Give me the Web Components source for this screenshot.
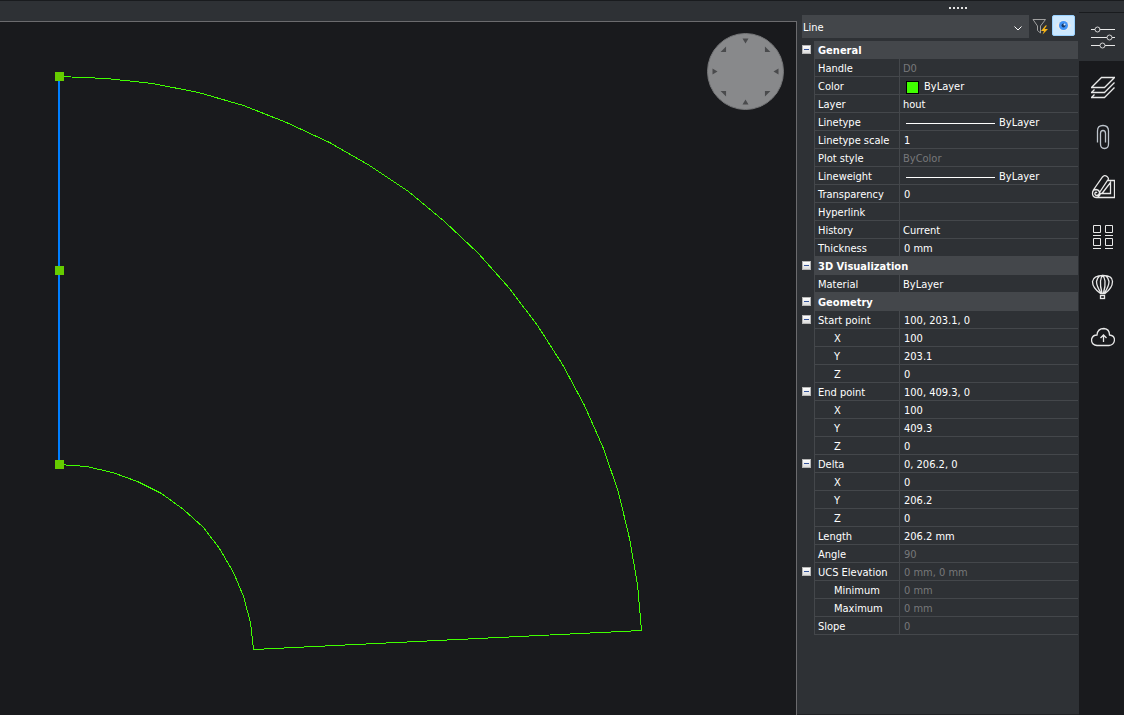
<!DOCTYPE html>
<html lang="en">
<head>
<meta charset="utf-8">
<title>Drawing – Properties</title>
<style>
  html, body { height: 100%; margin: 0; }
  body {
    background: #191a1d;
    color: #fff;
    font: 11px/18px "DejaVu Sans Condensed", Tahoma, "Noto Sans", sans-serif;
    --panel: #2e3135;
    --bar: #44474b;
    --canvas: #191a1d;
    --edge: #6b6b6e;
    --muted: #77787a;
  }
</style>
</head>
<body>
<cad-app>
  <drawing-view slot="drawing"></drawing-view>
  <property-panel slot="panel"></property-panel>
  <side-rail slot="rail"></side-rail>
</cad-app>

<script>
class CadApp extends HTMLElement {
  constructor() {
    super();
    this.attachShadow({ mode: 'open' }).innerHTML = `
      <style>
        :host { display: flex; min-height: 100vh; box-sizing: border-box; border-top: 1px solid #191b1e; background: var(--panel); }
        main { flex: 1; min-width: 0; display: flex; flex-direction: column; padding-top: 20px; }
        ::slotted([slot=drawing]) { flex: 1; }
        aside { flex: 0 0 282px; display: flex; }
        nav { flex: 0 0 45px; display: flex; }
        ::slotted([slot=panel]), ::slotted([slot=rail]) { flex: 1; min-width: 0; }
      </style>
      <main><slot name="drawing"></slot></main>
      <aside><slot name="panel"></slot></aside>
      <nav aria-label="Panels"><slot name="rail"></slot></nav>`;
  }
}

class DrawingView extends HTMLElement {
  constructor() {
    super();
    const cx = 59, cy = 636.7;
    const arc = (r, steps) => Array.from({ length: steps + 1 }, (_, i) => {
      const a = i / steps * 87.2 * Math.PI / 180;
      return Math.round(cx + r * Math.sin(a)) + ',' + Math.round(cy - r * Math.cos(a));
    });
    const outline = arc(583, 19).concat(arc(194.6, 11).reverse()).join(' ');
    const grip = y => `<rect x="55" y="${y - 4}" width="9" height="9" fill="#66cc00"/>`;
    this.attachShadow({ mode: 'open' }).innerHTML = `
      <style>
        :host { display: block; position: relative; overflow: hidden; background: var(--canvas); border: solid var(--edge); border-width: 1px 1px 0 0; }
        .sheet { position: absolute; inset: 0; width: 100%; height: 100%; }
        nav-wheel { position: absolute; top: 11px; right: 12px; }
      </style>
      <svg class="sheet" role="img" aria-label="Drawing" shape-rendering="crispEdges">
        <polyline points="${outline}" transform="translate(.5 .5)" fill="none" stroke="#40ff00"/>
        <rect x="58" y="54" width="2" height="388" fill="#007fff"/>
        ${grip(54)}${grip(248)}${grip(442)}
      </svg>
      <nav-wheel></nav-wheel>`;
  }
}

class NavWheel extends HTMLElement {
  constructor() {
    super();
    const corner = {
      45: 'M-2.500 2.500H3L-2.500 -3Z',
      135: 'M-2.500 -2.500H3L-2.500 3Z',
      225: 'M2.500 -2.500H-3L2.500 3Z',
      315: 'M2.500 2.500H-3L2.500 -3Z'
    };
    const marks = [0, 45, 90, 135, 180, 225, 270, 315].map(a => {
      const t = a * Math.PI / 180;
      const x = 38.5 + 31 * Math.sin(t), y = 38.5 - 31 * Math.cos(t);
      return a in corner
        ? `<path transform="translate(${x} ${y})" d="${corner[a]}"/>`
        : `<path transform="translate(${x} ${y}) rotate(${a})" d="M-3 -2H3L0 3Z"/>`;
    }).join('');
    this.attachShadow({ mode: 'open' }).innerHTML = `
      <style>:host { display: block; } svg { display: block; }</style>
      <svg width="77" height="77" aria-hidden="true">
        <circle cx="38.500" cy="38.500" r="38" fill="#88898b" stroke="#747577"/>
        <g fill="#4a4b4d">${marks}</g>
      </svg>`;
  }
}

/* [name, value, {options}] – a one-item entry is a category heading. */
const ROWS = [
  ['General'],
  ['Handle', 'D0', { off: 1 }],
  ['Color', 'ByLayer', { swatch: 1 }],
  ['Layer', 'hout'],
  ['Linetype', 'ByLayer', { line: 1 }],
  ['Linetype scale', '1'],
  ['Plot style', 'ByColor', { off: 1 }],
  ['Lineweight', 'ByLayer', { line: 1 }],
  ['Transparency', '0'],
  ['Hyperlink', ''],
  ['History', 'Current'],
  ['Thickness', '0 mm'],
  ['3D Visualization'],
  ['Material', 'ByLayer'],
  ['Geometry'],
  ['Start point', '100, 203.1, 0', { open: 1 }],
  ['X', '100', { sub: 1 }],
  ['Y', '203.1', { sub: 1 }],
  ['Z', '0', { sub: 1 }],
  ['End point', '100, 409.3, 0', { open: 1 }],
  ['X', '100', { sub: 1 }],
  ['Y', '409.3', { sub: 1 }],
  ['Z', '0', { sub: 1 }],
  ['Delta', '0, 206.2, 0', { open: 1 }],
  ['X', '0', { sub: 1 }],
  ['Y', '206.2', { sub: 1 }],
  ['Z', '0', { sub: 1 }],
  ['Length', '206.2 mm'],
  ['Angle', '90', { off: 1 }],
  ['UCS Elevation', '0 mm, 0 mm', { off: 1, open: 1 }],
  ['Minimum', '0 mm', { off: 1, sub: 1 }],
  ['Maximum', '0 mm', { off: 1, sub: 1 }],
  ['Slope', '0', { off: 1 }]
];

class PropertyGrid extends HTMLElement {
  constructor() {
    super();
    const toggle = name => `<td class="gutter"><button type="button" aria-expanded="true" aria-label="Collapse ${name}"></button></td>`;
    const rows = ROWS.map(([name, value, o = {}]) => {
      if (value === undefined)
        return `<tr class="group">${toggle(name)}<th colspan="2" scope="colgroup">${name}</th></tr>`;
      const mark = o.swatch ? '<i class="swatch"></i>' : o.line ? '<i class="line"></i>' : '';
      const number = /^\d/.test(value) ? ' number' : '';
      return `<tr class="${o.off ? 'off' : ''}${o.sub ? ' sub' : ''}">${o.open ? toggle(name) : '<td class="gutter"></td>'}` +
        `<th scope="row">${name}</th><td class="value${number}">${mark}${value}</td></tr>`;
    }).join('');
    this.attachShadow({ mode: 'open' }).innerHTML = `
      <style>
        :host { display: block; }
        table { width: 100%; table-layout: fixed; border-collapse: separate; border-spacing: 0; }
        col.g { width: 17px; } col.n { width: 85px; }
        tr { height: 18px; }
        th, td { box-sizing: border-box; height: 18px; padding: 0; line-height: 15px; text-align: left; white-space: nowrap; font-weight: normal; }
        th, .value { border-left: 1px solid var(--bar); border-bottom: 1px solid var(--bar); padding: 2px 0 0 3px; }
        .value.number { padding-left: 4px; }
        .group th { background: var(--bar); font-weight: bold; }
        .sub th { padding-left: 19px; }
        .off .value { color: var(--muted); }
        .gutter { line-height: 0; vertical-align: top; padding: 4px 0 0 5px; }
        button { display: block; width: 9px; height: 9px; padding: 0; border: 1px solid #b5b5b5; background: linear-gradient(#35549c, #35549c) center / 5px 1px no-repeat, linear-gradient(#fff, #dcdcdc); }
        .swatch, .line { display: inline-block; vertical-align: middle; }
        .swatch { width: 11px; height: 11px; margin: 0 5px 0 3px; border: 1px solid #000; background: #40ff00; }
        .line { width: 89px; height: 1px; margin: 0 4px 0 3px; background: #fff; }
      </style>
      <table aria-label="Object properties">
        <colgroup><col class="g"><col class="n"><col></colgroup>
        <tbody>${rows}</tbody>
      </table>`;
  }
}

class PropertyPanel extends HTMLElement {
  constructor() {
    super();
    this.attachShadow({ mode: 'open' }).innerHTML = `
      <style>
        :host { display: block; box-sizing: border-box; background: var(--panel); border-bottom: 1px solid #202225; }
        .grip { height: 14px; display: flex; justify-content: center; padding-left: 40px; gap: 2px; box-sizing: border-box; }
        .grip i { width: 2px; height: 2px; margin-top: 6px; background: #e4e4e4; }
        header { display: flex; padding: 0 4px 3px 5px; }
        .pick { position: relative; flex: 1; display: flex; background: #43464a; }
        select { flex: 1; height: 23px; border: 0; padding: 2px 0 0 1px; margin: 0; background: none; color: #fff; font: inherit; appearance: none; }
        .pick svg { position: absolute; right: 7px; top: 10px; pointer-events: none; }
        button { padding: 0; border: 0; background: none; display: flex; align-items: center; justify-content: center; height: 22px; }
        .filter { width: 23px; }
        .eye { width: 23px; box-sizing: border-box; background: #cce8ff; border: 1px solid #99d1ff; border-radius: 2px; height: 21px; }
        property-grid { margin-right: 1px; }
      </style>
      <div class="grip"><i></i><i></i><i></i><i></i><i></i></div>
      <header>
        <div class="pick">
          <select aria-label="Selected object"><option>Line</option></select>
          <svg width="8" height="8" fill="none" stroke="#fff" aria-hidden="true"><path d="M.5 1.500L4 5L7.500 1.500"/></svg>
        </div>
        <button class="filter" type="button" aria-label="Quick select">
          <svg width="17" height="18" aria-hidden="true"><path d="M1 2.500H13.500L8.500 9V16L5.500 13.500V9Z" fill="none" stroke="#a0a0a0"/><path d="M13.500 8.500L9 14H12L10.500 17.500L16 12H12.500L15 8.500Z" fill="#f8b517"/></svg>
        </button>
        <button class="eye" type="button" aria-label="Toggle selection" aria-pressed="true">
          <svg width="17" height="13" aria-hidden="true"><path d="M.5 6.500Q8.500 -4 16.500 6.500Q8.500 17 .5 6.500Z" fill="#e5e9ed"/><circle cx="8.500" cy="6.500" r="4.500" fill="#3f92f5"/><circle cx="8.500" cy="6.500" r="2" fill="#173a6c"/><circle cx="9.500" cy="5.500" r="1" fill="#d7e9ff"/></svg>
        </button>
      </header>
      <property-grid></property-grid>`;
  }
}

const ICONS = [
  ['Properties', '<path d="M0 6.500H4M8.500 6.500H24M0 14.500H16M21 14.500H24M0 22.500H9M14 22.500H24"/><g stroke="#d5d5d5"><circle cx="6.500" cy="6.500" r="2.500"/><circle cx="18.500" cy="14.500" r="2.500"/><circle cx="11.500" cy="22.500" r="2.500"/></g>'],
  ['Layers', '<path stroke-width="1.300" d="M10.500 5.500H23.500L13.500 15.500H.5ZM3.500 17.500L.5 20.500H13.500L23.500 10.500M3.500 22.500L.5 25.500H13.500L23.500 15.500"/>'],
  ['Attachments', '<path stroke="#bdc4cc" stroke-width="1.300" d="M6.500 20.500V9Q6.500 3.500 12 3.500T17.500 9V22Q17.500 26.500 13.500 26.500T9.500 22V11.500Q9.500 8.500 12 8.500T14.500 11.500V20.500"/>'],
  ['Sheets', '<path stroke-width="1.300" d="M2 18.500L11.500 5Q13.500 2.500 16 4.500T16.500 8.500L8.500 20.500M5 25.500H23.500V8.500H17M5 25.500Q1.500 25 1.500 21.500Q1.500 17.500 5 17.500Q8.500 18 8.500 21Q8 23.500 5.500 23.500Q3.500 23 4 21Q5 19.500 6 21M6 25.500Q9 24 9.500 21.500H19.500V10.500L11 21.500"/>'],
  ['Components', '<path d="M2.500 3.500H9.500V10.500H2.500ZM14.500 3.500H21.500V10.500H14.500ZM2.500 16.500H9.500V23.500H2.500ZM14.500 16.500H21.500V23.500H14.500ZM2 13.500H10M14 13.500H22M2 26.500H10M14 26.500H22"/>'],
  ['Explore', '<g transform="translate(0 1)" stroke-width="1.300"><path d="M9.500 20.500Q1.500 15 1.500 8.500Q2.500 2.500 12 2.500T21.500 8.500Q21.500 15 14 20.500ZM10 20Q5.500 13 5.500 8.500Q6.500 4.500 8.500 3M11 20Q9 13 9.500 8Q10 4 11.500 2.500Q13.500 4 14 8Q14.500 13 12.500 20M13.500 20Q18 13 18 8.500Q17 4.500 15 3"/><rect x="9.500" y="22.500" width="4" height="3"/></g>'],
  ['Cloud', '<path stroke-width="1.300" d="M6 23.500Q.5 23 .5 17.500Q1.500 13 6 13Q6.500 6.500 13 6.500Q18.500 7 18.500 13Q23.500 13.500 23.500 18Q23 23 18 23.500ZM12.500 20V13M9.500 16L12.500 13L15.500 16"/>']
];

class RailButton extends HTMLElement {
  connectedCallback() {
    if (this.shadowRoot) return;
    const [label, art] = ICONS[this.getAttribute('icon')];
    this.attachShadow({ mode: 'open' }).innerHTML = `
      <style>
        :host { display: block; }
        button { width: 100%; height: 50px; padding: 0 0 0 3px; border: 0; background: var(--canvas); display: flex; align-items: center; justify-content: center; }
        :host([active]) button { background: var(--panel); height: 48px; }
      </style>
      <button type="button" aria-label="${label}"><svg width="24" height="28" fill="none" stroke="#e8e8e8" aria-hidden="true">${art}</svg></button>`;
  }
}

class SideRail extends HTMLElement {
  constructor() {
    super();
    this.attachShadow({ mode: 'open' }).innerHTML = `
      <style>
        :host { display: flex; flex-direction: column; }
        .tabs { flex: 1; margin-top: 11px; border-top: 1px solid #191b1e; background: var(--canvas); }
      </style>
      <div class="tabs">${ICONS.map((_, i) => `<rail-button icon="${i}"${i ? '' : ' active'}></rail-button>`).join('')}</div>`;
  }
}

customElements.define('nav-wheel', NavWheel);
customElements.define('rail-button', RailButton);
customElements.define('property-grid', PropertyGrid);
customElements.define('property-panel', PropertyPanel);
customElements.define('drawing-view', DrawingView);
customElements.define('side-rail', SideRail);
customElements.define('cad-app', CadApp);
</script>
</body>
</html>
